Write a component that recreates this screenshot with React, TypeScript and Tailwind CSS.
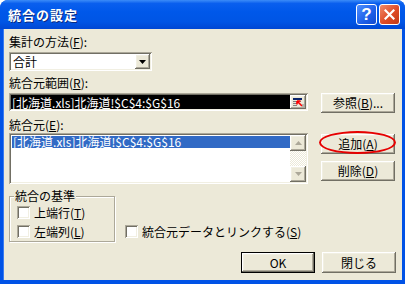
import React from 'react';

const raised =
  'shadow-[inset_-1px_-1px_#716F64,inset_1px_1px_#FFFFFF,inset_-2px_-2px_#ACA899,inset_2px_2px_#F1EFE2]';
const sunken =
  'shadow-[inset_1px_1px_#ACA899,inset_-1px_-1px_#FFFFFF,inset_2px_2px_#716F64,inset_-2px_-2px_#F1EFE2]';

function U({ children }: { children: React.ReactNode }) {
  return <span className="underline underline-offset-[1px]">{children}</span>;
}

function Btn({ children, isDefault, className = '' }: { children: React.ReactNode; isDefault?: boolean; className?: string }) {
  return (
    <div className={`${isDefault ? 'border border-black' : ''} ${className}`}>
      <div className={`flex h-full w-full items-center justify-center bg-[#ECE9D8] ${raised}`}>{children}</div>
    </div>
  );
}

function Check({ label }: { label: React.ReactNode }) {
  return (
    <div className="flex h-[13px] items-center">
      <div className={`h-[13px] w-[13px] bg-white ${sunken}`} />
      <span className="ml-[4px] leading-[13px]">{label}</span>
    </div>
  );
}

function Arrow({ down }: { down?: boolean }) {
  return (
    <svg width="7" height="4" viewBox="0 0 7 4">
      <path d={down ? 'M0 0H7L3.5 4Z' : 'M0 4H7L3.5 0Z'} fill="currentColor" />
    </svg>
  );
}

export default function App() {
  return (
    <div
      className="flex h-[284px] w-[405px] flex-col overflow-hidden rounded-t-[8px] bg-[#0052E6] text-[12px] text-black"
      style={{ fontFamily: '"Noto Sans CJK JP", "Liberation Sans", sans-serif' }}
    >
      {/* title bar */}
      <div className="flex h-[29px] shrink-0 items-center bg-[linear-gradient(to_bottom,#3C8CF8_0%,#0A5FEE_12%,#0058EA_40%,#0055E5_75%,#0047D3_100%)] pl-[8px] pr-[5px]">
        <span className="text-[13px] font-bold leading-none tracking-[1px] text-white [text-shadow:1px_1px_#0A2A80]">統合の設定</span>
        <div className="ml-auto flex gap-[2px]">
          <div className="flex h-[21px] w-[21px] items-center justify-center rounded-[3px] border border-white bg-[linear-gradient(135deg,#4F8FFF,#1D5FE8_60%,#1249CF)] text-[17px] font-bold leading-none text-white" style={{ fontFamily: '"Liberation Sans", sans-serif' }}>
            ?
          </div>
          <div className="flex h-[21px] w-[21px] items-center justify-center rounded-[3px] border border-white bg-[linear-gradient(135deg,#F08B6A,#DE4B26_55%,#C23A17)]">
            <svg width="11" height="11" viewBox="0 0 11 11">
              <path d="M1.5 1.5L9.5 9.5M9.5 1.5L1.5 9.5" stroke="white" strokeWidth="2.2" strokeLinecap="square" />
            </svg>
          </div>
        </div>
      </div>

      {/* body */}
      <div className="relative mx-[3px] mb-[4px] flex flex-1 flex-col border-l border-[#3A7BF0] bg-[#ECE9D8] pl-[5px] pt-[6px]">
        <div className="h-[14px] leading-[14px]">集計の方法(<U>F</U>):</div>
        <div className={`mt-[3px] flex h-[19px] w-[143px] items-center bg-white p-[2px] ${sunken}`}>
          <span className="flex-1 pl-[2px] leading-[13px]">合計</span>
          <div className={`flex h-[15px] w-[15px] items-center justify-center bg-[#ECE9D8] ${raised}`}>
            <Arrow down />
          </div>
        </div>

        <div className="mt-[5px] h-[14px] leading-[14px]">統合元範囲(<U>R</U>):</div>
        <div className="mt-[3px] flex items-start">
          <div className={`flex h-[18px] w-[299px] items-center bg-white p-[2px] ${sunken}`}>
            <div className="flex h-full flex-1 items-center bg-black pl-[1px] leading-[13px] text-white">[北海道.xls]北海道!$C$4:$G$16</div>
            <div className={`flex h-[14px] w-[16px] items-center justify-center bg-[#ECE9D8] ${raised}`}>
              <svg width="11" height="9" viewBox="0 0 11 9">
                <rect x="0" y="0" width="9" height="2" fill="#0A246A" />
                <path d="M0 3.5H8M0 5.5H4M0 7.5H4" stroke="#808080" strokeWidth="1" />
                <path d="M4 3L9 8M4 3V6.5M4 3H7.5" stroke="#FF0000" strokeWidth="1.6" />
                <path d="M10 6V9" stroke="#808080" />
              </svg>
            </div>
          </div>
          <Btn className="ml-[13px] h-[20px] w-[74px]">
            参照(<U>B</U>)...
          </Btn>
        </div>

        <div className="mt-[5px] h-[14px] leading-[14px]">統合元(<U>E</U>):</div>
        <div className="mt-[1px] flex items-start">
          <div className={`flex h-[51px] w-[299px] bg-white p-[2px] ${sunken}`}>
            <div className="flex-1 pt-[1px]">
              <div className="ml-[1px] h-[12px] bg-[#316AC5] pl-[1px] leading-[12px] text-white">[北海道.xls]北海道!$C$4:$G$16</div>
            </div>
            <div className="flex w-[16px] flex-col bg-[repeating-conic-gradient(#FFFFFF_0%_25%,#ECE9D8_0%_50%)] bg-[length:2px_2px]">
              <div className={`flex h-[16px] items-center justify-center bg-[#ECE9D8] text-[#ACA899] ${raised}`}>
                <Arrow />
              </div>
              <div className="flex-1" />
              <div className={`flex h-[16px] items-center justify-center bg-[#ECE9D8] text-[#ACA899] ${raised}`}>
                <Arrow down />
              </div>
            </div>
          </div>
          <div className="ml-[13px] mt-[1px] flex flex-col gap-[7px]">
            <div className="relative">
              <Btn className="h-[20px] w-[74px]">
                追加(<U>A</U>)
              </Btn>
              <div className="pointer-events-none absolute -left-[2px] -top-[3px] h-[23px] w-[77px] rounded-[50%] border-2 border-[#E60000]" />
            </div>
            <Btn className="h-[20px] w-[74px]">
              削除(<U>D</U>)
            </Btn>
          </div>
        </div>

        <div className="mt-[12px] flex items-start">
          <div className="relative h-[46px] w-[106px] border border-[#ACA899] pl-[7px] pt-[9px] shadow-[inset_1px_1px_#FFFFFF,1px_1px_#FFFFFF]">
            <span className="absolute -top-[8px] left-[4px] bg-[#ECE9D8] px-[1px] leading-[14px]">統合の基準</span>
            <div className="flex flex-col gap-[6px]">
              <Check label={<>上端行(<U>T</U>)</>} />
              <Check label={<>左端列(<U>L</U>)</>} />
            </div>
          </div>
          <div className="ml-[10px] mt-[29px]">
            <Check label={<>統合元データとリンクする(<U>S</U>)</>} />
          </div>
        </div>

        <div className="mt-[10px] flex justify-end gap-[7px] pr-[6px]">
          <Btn isDefault className="h-[21px] w-[74px]">
            OK
          </Btn>
          <Btn className="h-[21px] w-[74px]">閉じる</Btn>
        </div>
      </div>
    </div>
  );
}
